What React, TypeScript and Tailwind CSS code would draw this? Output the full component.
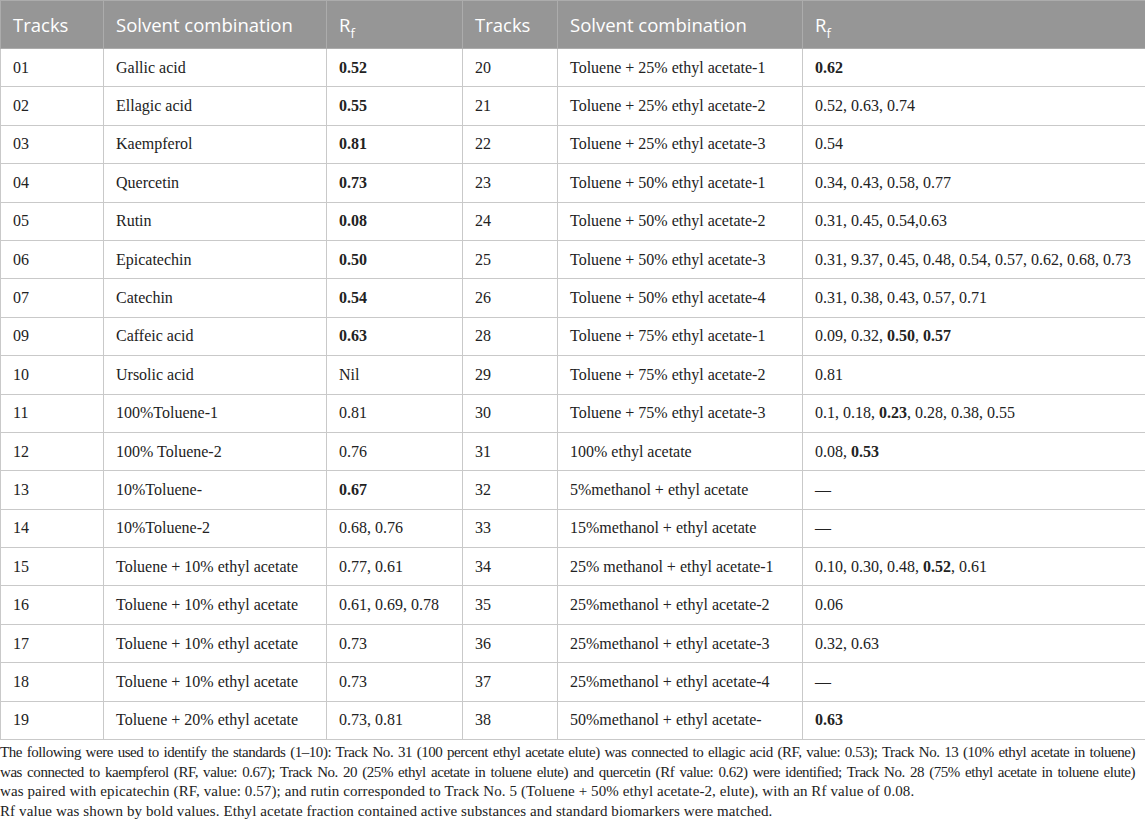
type Seg = [string, boolean?];
type Row = { track: string; solvent: string; rf: Seg[] };

const left: Row[] = [
  { track: "01", solvent: "Gallic acid", rf: [["0.52", true]] },
  { track: "02", solvent: "Ellagic acid", rf: [["0.55", true]] },
  { track: "03", solvent: "Kaempferol", rf: [["0.81", true]] },
  { track: "04", solvent: "Quercetin", rf: [["0.73", true]] },
  { track: "05", solvent: "Rutin", rf: [["0.08", true]] },
  { track: "06", solvent: "Epicatechin", rf: [["0.50", true]] },
  { track: "07", solvent: "Catechin", rf: [["0.54", true]] },
  { track: "09", solvent: "Caffeic acid", rf: [["0.63", true]] },
  { track: "10", solvent: "Ursolic acid", rf: [["Nil"]] },
  { track: "11", solvent: "100%Toluene-1", rf: [["0.81"]] },
  { track: "12", solvent: "100% Toluene-2", rf: [["0.76"]] },
  { track: "13", solvent: "10%Toluene-", rf: [["0.67", true]] },
  { track: "14", solvent: "10%Toluene-2", rf: [["0.68, 0.76"]] },
  { track: "15", solvent: "Toluene + 10% ethyl acetate", rf: [["0.77, 0.61"]] },
  { track: "16", solvent: "Toluene + 10% ethyl acetate", rf: [["0.61, 0.69, 0.78"]] },
  { track: "17", solvent: "Toluene + 10% ethyl acetate", rf: [["0.73"]] },
  { track: "18", solvent: "Toluene + 10% ethyl acetate", rf: [["0.73"]] },
  { track: "19", solvent: "Toluene + 20% ethyl acetate", rf: [["0.73, 0.81"]] },
];

const right: Row[] = [
  { track: "20", solvent: "Toluene + 25% ethyl acetate-1", rf: [["0.62", true]] },
  { track: "21", solvent: "Toluene + 25% ethyl acetate-2", rf: [["0.52, 0.63, 0.74"]] },
  { track: "22", solvent: "Toluene + 25% ethyl acetate-3", rf: [["0.54"]] },
  { track: "23", solvent: "Toluene + 50% ethyl acetate-1", rf: [["0.34, 0.43, 0.58, 0.77"]] },
  { track: "24", solvent: "Toluene + 50% ethyl acetate-2", rf: [["0.31, 0.45, 0.54,0.63"]] },
  { track: "25", solvent: "Toluene + 50% ethyl acetate-3", rf: [["0.31, 9.37, 0.45, 0.48, 0.54, 0.57, 0.62, 0.68, 0.73"]] },
  { track: "26", solvent: "Toluene + 50% ethyl acetate-4", rf: [["0.31, 0.38, 0.43, 0.57, 0.71"]] },
  { track: "28", solvent: "Toluene + 75% ethyl acetate-1", rf: [["0.09, 0.32, "], ["0.50", true], [", "], ["0.57", true]] },
  { track: "29", solvent: "Toluene + 75% ethyl acetate-2", rf: [["0.81"]] },
  { track: "30", solvent: "Toluene + 75% ethyl acetate-3", rf: [["0.1, 0.18, "], ["0.23", true], [", 0.28, 0.38, 0.55"]] },
  { track: "31", solvent: "100% ethyl acetate", rf: [["0.08, "], ["0.53", true]] },
  { track: "32", solvent: "5%methanol + ethyl acetate", rf: [["—"]] },
  { track: "33", solvent: "15%methanol + ethyl acetate", rf: [["—"]] },
  { track: "34", solvent: "25% methanol + ethyl acetate-1", rf: [["0.10, 0.30, 0.48, "], ["0.52", true], [", 0.61"]] },
  { track: "35", solvent: "25%methanol + ethyl acetate-2", rf: [["0.06"]] },
  { track: "36", solvent: "25%methanol + ethyl acetate-3", rf: [["0.32, 0.63"]] },
  { track: "37", solvent: "25%methanol + ethyl acetate-4", rf: [["—"]] },
  { track: "38", solvent: "50%methanol + ethyl acetate-", rf: [["0.63", true]] },
];

// footnote lines, broken where the source breaks them
const notes = [
  "The following were used to identify the standards (1–10): Track No. 31 (100 percent ethyl acetate elute) was connected to ellagic acid (RF, value: 0.53); Track No. 13 (10% ethyl acetate in toluene)",
  "was connected to kaempferol (RF, value: 0.67); Track No. 20 (25% ethyl acetate in toluene elute) and quercetin (Rf value: 0.62) were identified; Track No. 28 (75% ethyl acetate in toluene elute)",
  "was paired with epicatechin (RF, value: 0.57); and rutin corresponded to Track No. 5 (Toluene + 50% ethyl acetate-2, elute), with an Rf value of 0.08.",
  "Rf value was shown by bold values. Ethyl acetate fraction contained active substances and standard biomarkers were matched.",
];

const RfCell = ({ rf }: { rf: Seg[] }) => (
  <>
    {rf.map(([t, b], i) => (
      <span key={i} className={b ? "font-bold" : ""}>
        {t}
      </span>
    ))}
  </>
);

const Th = ({ children }: { children: React.ReactNode }) => (
  <th className="border border-[#acacac] px-3 text-left font-normal text-white">{children}</th>
);

const Td = ({ children }: { children: React.ReactNode }) => (
  <td className="border border-[#c9c9c9] px-3 whitespace-nowrap">{children}</td>
);

const RfHead = () => (
  <span>
    R<sub className="text-[13px] align-[-3px]">f</sub>
  </span>
);

export default function App() {
  return (
    <div className="w-[1145px] h-[827px] bg-white overflow-hidden text-[#222]">
      <table
        className="w-[1145px] table-fixed border-collapse text-[16px]"
        style={{ fontFamily: '"Liberation Serif", serif' }}
      >
        <colgroup>
          <col className="w-[103px]" />
          <col className="w-[223px]" />
          <col className="w-[136px]" />
          <col className="w-[95px]" />
          <col className="w-[245px]" />
          <col className="w-[343px]" />
        </colgroup>
        <thead>
          <tr
            className="h-[48px] bg-[#969696] text-[18.5px]"
            style={{ fontFamily: '"Open Sans", sans-serif' }}
          >
            <Th>Tracks</Th>
            <Th>Solvent combination</Th>
            <Th>
              <RfHead />
            </Th>
            <Th>Tracks</Th>
            <Th>Solvent combination</Th>
            <Th>
              <RfHead />
            </Th>
          </tr>
        </thead>
        <tbody>
          {left.map((l, i) => {
            const r = right[i];
            return (
              <tr key={l.track} className="h-[38.4px]">
                <Td>{l.track}</Td>
                <Td>{l.solvent}</Td>
                <Td>
                  <RfCell rf={l.rf} />
                </Td>
                <Td>{r.track}</Td>
                <Td>{r.solvent}</Td>
                <Td>
                  <RfCell rf={r.rf} />
                </Td>
              </tr>
            );
          })}
        </tbody>
      </table>
      <div
        className="mt-[3px] w-[1135px] text-[15px] leading-[19.5px]"
        style={{ fontFamily: '"Liberation Serif", serif' }}
      >
        {notes.map((n, i) => (
          <div
            key={i}
            className={
              i < 2
                ? "whitespace-nowrap tracking-[-0.45px] text-justify [text-align-last:justify]"
                : "whitespace-nowrap tracking-[0.1px]"
            }
          >
            {n}
          </div>
        ))}
      </div>
    </div>
  );
}
